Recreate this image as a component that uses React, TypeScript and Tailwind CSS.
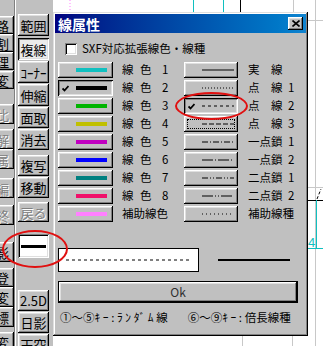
import React from "react";

const raised =
  "shadow-[inset_-1px_-1px_#000,inset_1px_1px_#fff,inset_-2px_-2px_#808080,inset_2px_2px_#dfdfdf]";
const pressed =
  "shadow-[inset_1px_1px_#000,inset_-1px_-1px_#fff,inset_2px_2px_#808080,inset_-2px_-2px_#dfdfdf]";
const sunken =
  "shadow-[inset_1px_1px_#808080,inset_-1px_-1px_#fff,inset_2px_2px_#000,inset_-2px_-2px_#dfdfdf]";
const frame =
  "shadow-[inset_-1px_-1px_#000,inset_1px_1px_#dfdfdf,inset_-2px_-2px_#808080,inset_2px_2px_#fff]";
const disabledText = "text-[#808080] [text-shadow:1px_1px_#fff]";

const col1 = [
  { ch: "路", cls: "mt-[16px] h-[18px]" },
  { ch: "割", cls: "h-[18px]" },
  { ch: "理", cls: "h-[18px]" },
  { ch: "変", cls: "mt-[1px] h-[18px]" },
  { ch: "比", cls: "mt-[15px] h-[20px]", off: true },
  { ch: "解", cls: "mt-[5px] h-[20px]", off: true },
  { ch: "属", cls: "h-[20px]", off: true },
  { ch: "編", cls: "mt-[9px] h-[20px]", off: true },
  { ch: "終", cls: "mt-[7px] h-[20px]", off: true },
  { ch: "影", cls: "mt-[17px] h-[20px]" },
  { ch: "登", cls: "mt-[6px] h-[19px]" },
  { ch: "変", cls: "h-[20px]" },
  { ch: "標", cls: "h-[20px]" },
  { ch: "変", cls: "mt-[5px] h-[20px]" },
];

const col2 = [
  { t: "範囲", cls: "mt-[14px] h-[22px]" },
  { t: "複線", cls: "mt-[2px] h-[22px]", on: true },
  { t: "ｺｰﾅｰ", cls: "mt-[1px] h-[22px]" },
  { t: "伸縮", cls: "mt-[1px] h-[22px]" },
  { t: "面取", cls: "mt-[1px] h-[21px]" },
  { t: "消去", cls: "mt-[1px] h-[21px]" },
  { t: "複写", cls: "mt-[5px] h-[21px]" },
  { t: "移動", cls: "mt-[1px] h-[21px]" },
  { t: "戻る", cls: "mt-[4px] h-[20px]", off: true },
];

const col2b = [
  { t: "2.5D", cls: "mt-[32px] h-[21px]" },
  { t: "日影", cls: "mt-[1px] h-[21px]" },
  { t: "天空", cls: "mt-[1px] h-[21px]" },
];

// right-hand labels: [text, width] pieces laid side by side
const rows = [
  { color: "#10c0c0", left: ["線", "色", "1"], dash: "", right: [["実", 23], ["線", 0]] },
  { color: "#000000", left: ["線", "色", "2"], dash: "1 2", right: [["点", 23], ["線", 17], ["1", 0]], selL: true },
  { color: "#00b400", left: ["線", "色", "3"], dash: "3 3", right: [["点", 23], ["線", 17], ["2", 0]], selR: true },
  { color: "#c0c000", left: ["線", "色", "4"], dash: "5 2", right: [["点", 23], ["線", 17], ["3", 0]], focus: true },
  { color: "#c000c0", left: ["線", "色", "5"], dash: "6 2 1 2", right: [["一点鎖", 40], ["1", 0]] },
  { color: "#0000ff", left: ["線", "色", "6"], dash: "11 2 1 2", right: [["一点鎖", 40], ["2", 0]] },
  { color: "#008080", left: ["線", "色", "7"], dash: "6 2 1 2 1 2", right: [["二点鎖", 40], ["1", 0]] },
  { color: "#f0106a", left: ["線", "色", "8"], dash: "11 2 1 2 1 2", right: [["二点鎖", 40], ["2", 0]] },
  { color: "#ff80ff", left: ["補助線色"], dash: "1 3", right: [["補助線種", 0]] },
] as {
  color: string;
  left: string[];
  dash: string;
  right: [string, number][];
  selL?: boolean;
  selR?: boolean;
  focus?: boolean;
}[];

const Check = () => (
  <svg width="7" height="7" viewBox="0 0 7 7" className="shrink-0">
    <path d="M0.5 3.5 L2.5 5.5 L6.5 1" stroke="#000" strokeWidth="1.8" fill="none" />
  </svg>
);

const LeftLabel = ({ parts }: { parts: string[] }) =>
  parts.length === 1 ? (
    <span>{parts[0]}</span>
  ) : (
    <span className="flex">
      <span className="w-[18px]">{parts[0]}</span>
      <span className="w-[22px]">{parts[1]}</span>
      <span>{parts[2]}</span>
    </span>
  );

const RightLabel = ({ parts }: { parts: [string, number][] }) => (
  <span className="flex">
    {parts.map(([t, w], i) => (
      <span key={i} className="shrink-0" style={w ? { width: w } : undefined}>
        {t}
      </span>
    ))}
  </span>
);

const App: React.FC = () => {
  return (
    <div className="relative w-[323px] h-[346px] overflow-hidden flex bg-[#c0c0c0] text-black font-['Noto_Sans_CJK_JP',sans-serif]">
      {/* far left toolbar, cut off by the screen edge */}
      <div className="w-[14px] shrink-0 flex flex-col overflow-hidden">
        {col1.map((b, i) => (
          <div
            key={i}
            className={`${b.cls} shrink-0 w-[34px] -ml-[20px] flex items-center justify-end pr-[5px] text-[13px] leading-none ${raised} ${b.off ? disabledText : ""}`}
          >
            {b.ch}
          </div>
        ))}
      </div>
      <div className="w-[3px] shrink-0 border-l border-[#808080] bg-[#c0c0c0] shadow-[inset_1px_0_#fff]" />

      {/* command buttons */}
      <div className="w-[36px] shrink-0 flex flex-col pl-[1px] overflow-hidden">
        {col2.map((b, i) => (
          <div
            key={i}
            className={`${b.cls} shrink-0 w-[31px] flex items-center justify-center text-[13px] leading-none ${b.on ? `${pressed} bg-[#ebebeb]` : raised} ${b.off ? disabledText : ""}`}
          >
            {b.t}
          </div>
        ))}
        <div className={`mt-[12px] h-[24px] w-[31px] shrink-0 bg-white flex items-center px-[3px] ${sunken}`}>
          <div className="h-[3px] w-full bg-black" />
        </div>
        {col2b.map((b, i) => (
          <div
            key={i}
            className={`${b.cls} shrink-0 w-[31px] flex items-center justify-center text-[13px] leading-none ${raised}`}
          >
            {b.t}
          </div>
        ))}
      </div>

      {/* drawing canvas */}
      <div className="relative flex-1 bg-white">
        <svg className="absolute inset-0" width="270" height="346">
          <line x1="17" y1="0" x2="17" y2="11" stroke="#ff80ff" strokeDasharray="1 2" />
          <line x1="140.5" y1="0" x2="140.5" y2="13" stroke="#10c0c0" />
          <line x1="170.5" y1="0" x2="170.5" y2="13" stroke="#10c0c0" />
          <line x1="187.5" y1="0" x2="187.5" y2="13" stroke="#000" />
          <line x1="240.5" y1="0" x2="240.5" y2="13" stroke="#c8c8c8" />
          <line x1="189.5" y1="336" x2="189.5" y2="346" stroke="#c8c8c8" />
          <line x1="239.5" y1="336" x2="239.5" y2="346" stroke="#c8c8c8" />
          <line x1="262.5" y1="0" x2="262.5" y2="346" stroke="#c8c8c8" />
          <line x1="255" y1="20.5" x2="270" y2="20.5" stroke="#c8c8c8" />
          <line x1="255" y1="187.5" x2="270" y2="187.5" stroke="#c8c8c8" />
          <line x1="264" y1="199" x2="268" y2="189" stroke="#000" strokeDasharray="3 2" />
          <line x1="255" y1="200.5" x2="270" y2="200.5" stroke="#000" />
          <line x1="263.5" y1="200" x2="263.5" y2="248" stroke="#10c0c0" />
          <line x1="255" y1="248.5" x2="270" y2="248.5" stroke="#10c0c0" />
          <text x="255" y="247" fontSize="13" fill="#10c0c0" fontFamily="Liberation Sans, sans-serif">4</text>
        </svg>

        {/* 線属性 dialog */}
        <div className={`absolute left-0 top-[12px] w-[255px] h-[324px] bg-[#c0c0c0] p-[2px] ${frame}`}>
          <div className="h-[19px] flex items-center justify-between bg-linear-to-r from-[#000080] to-[#1084d0] pl-[3px] pr-[3px]">
            <span className="text-white font-bold text-[14px] leading-none">線属性</span>
            <div className={`w-[15px] h-[13px] flex items-center justify-center bg-[#c0c0c0] ${raised}`}>
              <svg width="8" height="7" viewBox="0 0 8 7">
                <path d="M0.5 0.5 L7.5 6.5 M7.5 0.5 L0.5 6.5" stroke="#000" strokeWidth="1.6" />
              </svg>
            </div>
          </div>

          <div className="mt-[10px] ml-[10px] h-[12px] flex items-center">
            <div className={`w-[12px] h-[12px] bg-white ${sunken}`} />
            <span className="ml-[5px] text-[11.5px] leading-none whitespace-nowrap">SXF対応拡張線色・線種</span>
          </div>

          <div className="mt-[7px] ml-[3px] flex flex-col gap-[2px] text-[11.5px] leading-none">
            {rows.map((r, i) => (
              <div key={i} className="h-[16px] flex items-center">
                <div className={`w-[55px] h-[16px] flex items-center pl-[4px] pr-[6px] ${r.selL ? pressed : raised}`}>
                  {r.selL && <Check />}
                  <div className="ml-auto w-[31px] h-[4px]" style={{ backgroundColor: r.color }} />
                </div>
                <div className="ml-[9px] w-[62px]">
                  <LeftLabel parts={r.left} />
                </div>
                <div className={`relative w-[54px] h-[16px] flex items-center pl-[4px] pr-[4px] ${r.selR ? pressed : raised}`}>
                  {r.focus && <div className="absolute inset-[3px] border border-dotted border-black" />}
                  {r.selR && <Check />}
                  <svg width="32" height="2" className="ml-auto">
                    <line x1="0" y1="1" x2="32" y2="1" stroke="#000" strokeDasharray={r.dash || undefined} />
                  </svg>
                </div>
                <div className="ml-[10px]">
                  <RightLabel parts={r.right} />
                </div>
              </div>
            ))}
          </div>

          <div className="mt-[26px] ml-[3px] flex items-center">
            <div className="w-[141px] h-[24px] bg-white border border-black flex items-center px-[7px]">
              <svg width="125" height="2">
                <line x1="0" y1="1" x2="125" y2="1" stroke="#000" strokeDasharray="3 3" />
              </svg>
            </div>
            <div className="ml-[19px] w-[72px] h-[2px] bg-black" />
          </div>

          <div className="mt-[9px] ml-[3px] w-[240px] h-[22px] border border-black">
            <div className={`w-full h-full flex items-center justify-center text-[12px] text-[#303030] ${raised}`}>
              Ok
            </div>
          </div>

          <div className="mt-[9px] ml-[5px] flex text-[11.5px] leading-none whitespace-nowrap">
            <span>①～⑤</span>
            <span className="tracking-[2.6px]">ｷｰ:ﾗﾝﾀﾞﾑ</span>
            <span>線</span>
            <span className="ml-[20px]">⑥～⑨</span>
            <span className="tracking-[2.6px]">ｷｰ:</span>
            <span>倍長線種</span>
          </div>
        </div>
      </div>

      {/* red annotation marks */}
      <div className="absolute left-[175px] top-[92px] w-[73px] h-[28px] rounded-[50%] border-2 border-[#e01010]" />
      <div className="absolute left-[2px] top-[230px] w-[66px] h-[38px] rounded-[50%] border-2 border-[#e01010]" />
    </div>
  );
};

export default App;
